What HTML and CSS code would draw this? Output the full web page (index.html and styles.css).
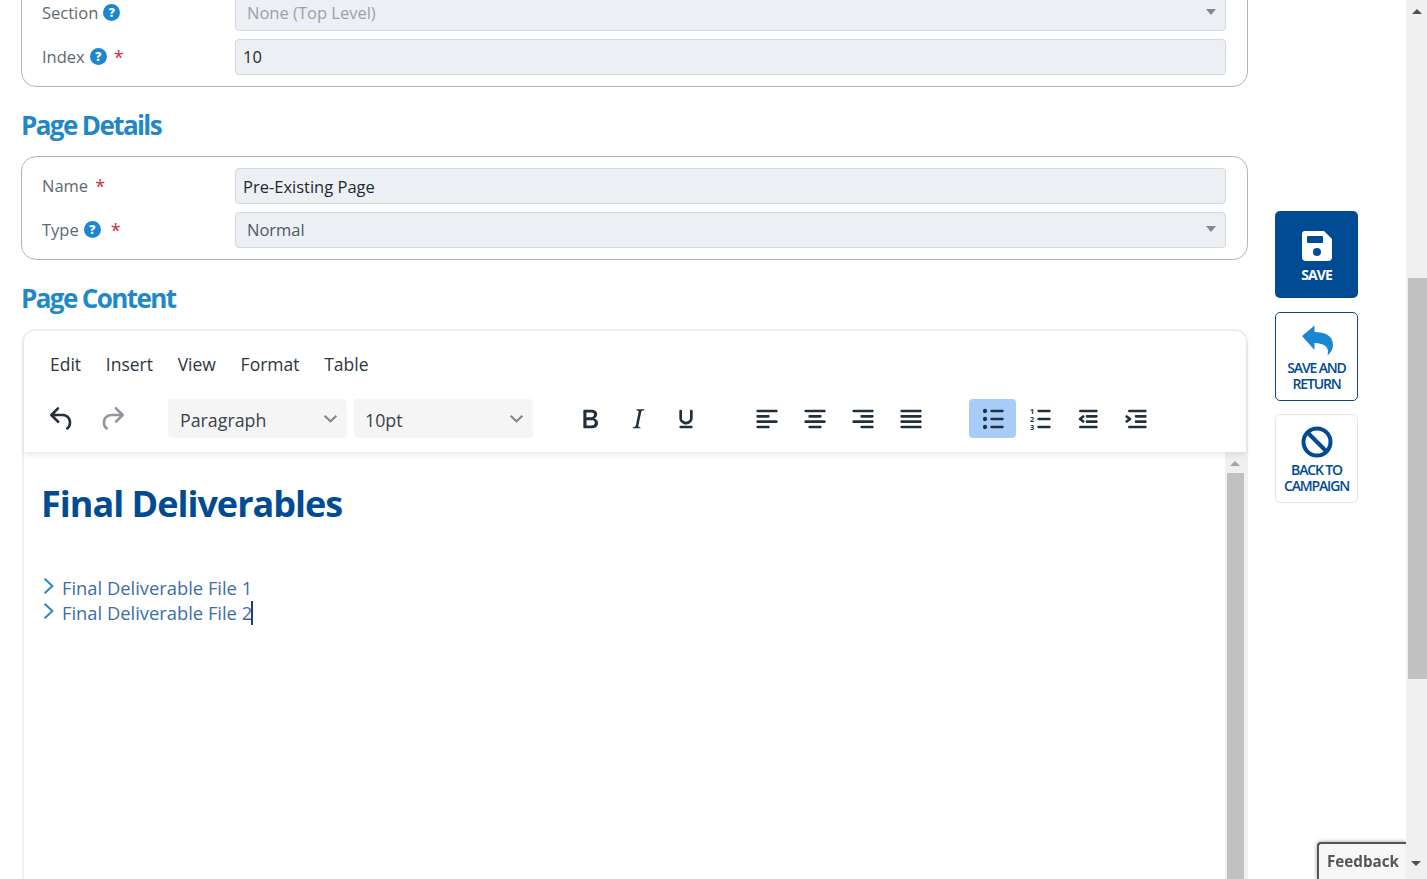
FILE: index.html
```html
<!DOCTYPE html>
<html lang="en">
<head>
<meta charset="utf-8">
<title>Edit Page</title>
<link rel="stylesheet" href="styles.css">
</head>
<body>
<div class="shell">
  <main class="main">
    <section class="card">
      <div class="row">
        <div class="label">Section <span class="help">?</span></div>
        <div class="field select muted">None (Top Level)<span class="tri"></span></div>
      </div>
      <div class="row">
        <div class="label">Index <span class="help">?</span> <span class="req">*</span></div>
        <div class="field text digits">10</div>
      </div>
    </section>

    <h2 class="heading">Page Details</h2>
    <section class="card">
      <div class="row">
        <div class="label">Name <span class="req">*</span></div>
        <div class="field text">Pre-Existing Page</div>
      </div>
      <div class="row">
        <div class="label">Type <span class="help">?</span> <span class="req wide">*</span></div>
        <div class="field select">Normal<span class="tri"></span></div>
      </div>
    </section>

    <h2 class="heading">Page Content</h2>
    <section class="editor">
      <div class="header">
        <nav class="menubar">
          <span>Edit</span><span>Insert</span><span>View</span><span>Format</span><span>Table</span>
        </nav>
        <div class="toolbar">
          <div class="group history">
            <button class="tool tall"><svg class="ico" viewBox="0 0 24 24"><path d="M6.4 8H12c3.7 0 6.2 2 6.8 5.1.6 2.7-.4 5.6-2.3 6.8a1 1 0 0 1-1-1.8c1.1-.6 1.8-2.7 1.4-4.6-.5-2.1-2.1-3.5-4.9-3.5H6.4l3.3 3.3a1 1 0 1 1-1.4 1.4l-5-5a1 1 0 0 1 0-1.4l5-5a1 1 0 0 1 1.4 1.4L6.4 8Z"/></svg></button>
            <button class="tool tall off"><svg class="ico" viewBox="0 0 24 24"><path d="M17.6 10H12c-2.8 0-4.4 1.4-4.9 3.5-.4 2 .3 4 1.4 4.6a1 1 0 1 1-1 1.8c-2-1.2-2.9-4.1-2.3-6.8.6-3 3-5.1 6.8-5.1h5.6l-3.3-3.3a1 1 0 1 1 1.4-1.4l5 5a1 1 0 0 1 0 1.4l-5 5a1 1 0 0 1-1.4-1.4l3.3-3.3Z"/></svg></button>
          </div>
          <div class="group pickers">
            <div class="picker para">Paragraph<svg class="chev" viewBox="0 0 14 8"><path d="M1.5 1.5 7 6.5l5.5-5"/></svg></div>
            <div class="picker size">10pt<svg class="chev" viewBox="0 0 14 8"><path d="M1.5 1.5 7 6.5l5.5-5"/></svg></div>
          </div>
          <div class="group format">
            <button class="tool"><svg class="ico" viewBox="0 0 24 24"><path d="M7.8 19c-.3 0-.5 0-.6-.2l-.2-.5V5.7c0-.2 0-.4.2-.5l.6-.2h5c1.5 0 2.7.3 3.5 1 .7.6 1.1 1.4 1.1 2.5a3 3 0 0 1-.6 1.9c-.4.6-1 1-1.6 1.2.4.1.9.3 1.3.6s.8.7 1 1.2c.4.4.5 1 .5 1.6 0 1.3-.4 2.3-1.3 3-.8.7-2.1 1-3.8 1H7.8Zm5-8.3c.6 0 1.2-.1 1.6-.5.4-.3.6-.7.6-1.3 0-1.1-.8-1.7-2.3-1.7H9.3v3.5h3.4Zm.5 6c.7 0 1.3-.1 1.7-.4.4-.4.6-.9.6-1.5s-.2-1-.7-1.4c-.4-.3-1-.4-2-.4H9.4v3.8h4Z"/></svg></button>
            <button class="tool"><svg class="ico" viewBox="0 0 24 24"><path d="m16.7 4.7-.1.9h-.3c-.6 0-1 0-1.4.3-.3.3-.4.6-.5 1.1l-2.1 9.8v.6c0 .5.4.8 1.4.8h.2l-.2.8H8l.2-.8h.2c1.1 0 1.8-.5 2-1.5l2-9.8.1-.5c0-.6-.4-.8-1.4-.8h-.3l.2-.9h5.8Z"/></svg></button>
            <button class="tool"><svg class="ico" viewBox="0 0 24 24"><path d="M16 5c.6 0 1 .4 1 1v5.5a4 4 0 0 1-.4 1.8l-1 1.4a5.3 5.3 0 0 1-5.5 1 5 5 0 0 1-1.6-1c-.5-.4-.8-.9-1.1-1.4a4 4 0 0 1-.4-1.8V6c0-.6.4-1 1-1s1 .4 1 1v5.5c0 .3 0 .6.2 1l.6.7a3.3 3.3 0 0 0 2.2.8 3.4 3.4 0 0 0 2.2-.8c.3-.2.4-.5.6-.8l.2-.9V6c0-.6.4-1 1-1ZM8 17h8c.6 0 1 .4 1 1s-.4 1-1 1H8a1 1 0 0 1 0-2Z"/></svg></button>
          </div>
          <div class="group align">
            <button class="tool"><svg class="ico" viewBox="0 0 24 24"><path d="M5 5h14c.6 0 1 .4 1 1s-.4 1-1 1H5a1 1 0 1 1 0-2Zm0 4h8c.6 0 1 .4 1 1s-.4 1-1 1H5a1 1 0 1 1 0-2Zm0 8h8c.6 0 1 .4 1 1s-.4 1-1 1H5a1 1 0 0 1 0-2Zm0-4h14c.6 0 1 .4 1 1s-.4 1-1 1H5a1 1 0 0 1 0-2Z"/></svg></button>
            <button class="tool"><svg class="ico" viewBox="0 0 24 24"><path d="M5 5h14c.6 0 1 .4 1 1s-.4 1-1 1H5a1 1 0 1 1 0-2Zm3 4h8c.6 0 1 .4 1 1s-.4 1-1 1H8a1 1 0 1 1 0-2Zm0 8h8c.6 0 1 .4 1 1s-.4 1-1 1H8a1 1 0 0 1 0-2Zm-3-4h14c.6 0 1 .4 1 1s-.4 1-1 1H5a1 1 0 0 1 0-2Z"/></svg></button>
            <button class="tool"><svg class="ico" viewBox="0 0 24 24"><path d="M5 5h14c.6 0 1 .4 1 1s-.4 1-1 1H5a1 1 0 1 1 0-2Zm6 4h8c.6 0 1 .4 1 1s-.4 1-1 1h-8a1 1 0 0 1 0-2Zm0 8h8c.6 0 1 .4 1 1s-.4 1-1 1h-8a1 1 0 0 1 0-2Zm-6-4h14c.6 0 1 .4 1 1s-.4 1-1 1H5a1 1 0 0 1 0-2Z"/></svg></button>
            <button class="tool"><svg class="ico" viewBox="0 0 24 24"><path d="M5 5h14c.6 0 1 .4 1 1s-.4 1-1 1H5a1 1 0 1 1 0-2Zm0 4h14c.6 0 1 .4 1 1s-.4 1-1 1H5a1 1 0 1 1 0-2Zm0 4h14c.6 0 1 .4 1 1s-.4 1-1 1H5a1 1 0 0 1 0-2Zm0 4h14c.6 0 1 .4 1 1s-.4 1-1 1H5a1 1 0 0 1 0-2Z"/></svg></button>
          </div>
          <div class="group lists">
            <button class="tool active"><svg class="ico" viewBox="0 0 24 24"><path d="M11 5h8c.6 0 1 .4 1 1s-.4 1-1 1h-8a1 1 0 0 1 0-2Zm0 6h8c.6 0 1 .4 1 1s-.4 1-1 1h-8a1 1 0 0 1 0-2Zm0 6h8c.6 0 1 .4 1 1s-.4 1-1 1h-8a1 1 0 0 1 0-2Z"/><circle cx="6" cy="6" r="1.6"/><circle cx="6" cy="12" r="1.6"/><circle cx="6" cy="18" r="1.6"/></svg></button>
            <button class="tool narrow"><svg class="ico" viewBox="0 0 24 24"><path d="M11 5h8c.6 0 1 .4 1 1s-.4 1-1 1h-8a1 1 0 0 1 0-2Zm0 6h8c.6 0 1 .4 1 1s-.4 1-1 1h-8a1 1 0 0 1 0-2Zm0 6h8c.6 0 1 .4 1 1s-.4 1-1 1h-8a1 1 0 0 1 0-2Z"/><text class="num" x="6" y="8">1</text><text class="num" x="6" y="14">2</text><text class="num" x="6" y="20">3</text></svg></button>
            <button class="tool"><svg class="ico" viewBox="0 0 24 24"><path d="M7 5h12c.6 0 1 .4 1 1s-.4 1-1 1H7a1 1 0 1 1 0-2Zm5 4h7c.6 0 1 .4 1 1s-.4 1-1 1h-7a1 1 0 0 1 0-2Zm0 4h7c.6 0 1 .4 1 1s-.4 1-1 1h-7a1 1 0 0 1 0-2Zm-5 4h12c.6 0 1 .4 1 1s-.4 1-1 1H7a1 1 0 0 1 0-2ZM8.6 9.3a1 1 0 0 1 1.3 1.5L8.3 12l1.6 1.2a1 1 0 0 1-1.3 1.5l-2.5-2a1 1 0 0 1 0-1.5l2.5-1.9Z"/></svg></button>
            <button class="tool wide"><svg class="ico" viewBox="0 0 24 24"><path d="M7 5h12c.6 0 1 .4 1 1s-.4 1-1 1H7a1 1 0 1 1 0-2Zm5 4h7c.6 0 1 .4 1 1s-.4 1-1 1h-7a1 1 0 0 1 0-2Zm0 4h7c.6 0 1 .4 1 1s-.4 1-1 1h-7a1 1 0 0 1 0-2Zm-5 4h12c.6 0 1 .4 1 1s-.4 1-1 1H7a1 1 0 0 1 0-2ZM5.6 9.3l2.5 1.9a1 1 0 0 1 0 1.5l-2.5 2a1 1 0 0 1-1.3-1.5L6 12l-1.7-1.2a1 1 0 0 1 1.3-1.5Z"/></svg></button>
          </div>
        </div>
      </div>
      <div class="editbody">
        <div class="content">
          <h1 class="doc-title">Final Deliverables</h1>
          <ul class="doc-list">
            <li><svg class="marker" viewBox="0 0 10 16"><path d="M1.5 1.5 8.5 8l-7 6.5"/></svg>Final Deliverable File 1</li>
            <li><svg class="marker" viewBox="0 0 10 16"><path d="M1.5 1.5 8.5 8l-7 6.5"/></svg>Final Deliverable File 2<span class="caret"></span></li>
          </ul>
        </div>
        <div class="inner-scroll"><span class="up-tri"></span><div class="inner-thumb"></div></div>
      </div>
    </section>
  </main>

  <aside class="actions">
    <button class="action primary">
      <svg class="action-ico" viewBox="0 0 32 32"><path class="white" d="M4 1h19l8 8v18a4 4 0 0 1-4 4H5a4 4 0 0 1-4-4V4a3 3 0 0 1 3-3Z"/><rect class="navy" x="6" y="6" width="16" height="7" rx="1"/><circle class="navy" cx="16" cy="22" r="4"/></svg>
      <span>SAVE</span>
    </button>
    <button class="action outline">
      <svg class="action-ico" viewBox="0 0 32 32"><path class="blue" d="M1 12 13.500 1.500V8C23 8 32 11 32 21c0 4-2 8-5.500 10.500 1.500-5 1-12-13-12.500v7Z"/></svg>
      <span>SAVE AND<br>RETURN</span>
    </button>
    <button class="action ghost">
      <svg class="action-ico" viewBox="0 0 32 32"><circle class="ring" cx="16" cy="16" r="13.500"/><path class="ring" d="M6.500 6.500l19 19"/></svg>
      <span>BACK TO<br>CAMPAIGN</span>
    </button>
  </aside>

  <div class="page-scroll"><span class="up-tri dark"></span><div class="page-thumb"></div><span class="down-tri"></span></div>
</div>
<div class="feedback">Feedback</div>
</body>
</html>
```

FILE: styles.css
```css
* { box-sizing: border-box; }
html, body { margin: 0; height: 100%; overflow: hidden; background: #fff; }
body { font-family: "Open Sans", "Noto Sans", sans-serif; color: #24292f; }
button { font: inherit; border: 0; background: none; padding: 0; }

.shell { display: flex; height: 879px; overflow: hidden; }
.main { width: 1227px; margin: -17px 0 0 21px; flex: none; }

.card { border: 1px solid #aeb7bf; border-radius: 15px; padding: 11px 21px 11px 20px; display: flex; flex-direction: column; gap: 8px; }
.row { display: flex; align-items: stretch; }
.label { width: 193px; flex: none; display: flex; align-items: center; gap: 5px; font-size: 16.500px; color: #5d6872; padding-bottom: 1px; white-space: nowrap; }
.help { width: 17px; height: 17px; border-radius: 50%; background: #1b87d3; color: #fff; font-size: 12px; font-weight: 800; line-height: 17px; text-align: center; }
.req { color: #d8283c; font-size: 18px; line-height: 1; margin-left: 2px; }
.req.wide { margin-left: 5px; }
.field { flex: 1; height: 36px; background: #ecf0f5; border: 1px solid #d2d8de; border-radius: 4px; font-size: 16.500px; line-height: 34px; color: #23282d; position: relative; }
.field.text { padding-left: 7px; line-height: 35px; }
.field.digits { line-height: 33px; }
.field.select { padding-left: 11px; color: #4e5963; }
.field.muted { color: #98a1aa; }
.tri { position: absolute; right: 9px; top: 13px; border: 5.500px solid transparent; border-top: 6px solid #808890; border-bottom: 0; }

.heading { height: 69px; margin: 0; padding-top: 20px; font-size: 26px; line-height: 36px; font-weight: 700; letter-spacing: -1.600px; color: #1e88c9; }

.editor { border: 2px solid #f0f0f0; border-bottom: 0; border-radius: 13px 13px 0 0; margin-left: 1px; width: 1226px; height: 620px; background: #fff; }
.header { height: 121px; box-shadow: 0 3px 6px rgba(0,0,0,.09); position: relative; border-radius: 11px 11px 0 0; }
.menubar { display: flex; gap: 24.700px; padding: 19px 0 0 26px; height: 68px; font-size: 17.500px; line-height: 28px; color: #2d3640; }

.toolbar { display: flex; align-items: center; height: 39px; padding-left: 12.500px; }
.group { display: flex; align-items: center; }
.tool { width: 48px; height: 39px; display: flex; align-items: center; justify-content: center; border-radius: 4px; }
.tool.tall { width: 50.500px; }
.tool.narrow { width: 47px; }
.tool.wide { width: 49px; }
.ico { width: 32px; height: 32px; fill: #222f3e; }
.tool.off .ico { fill: #8f969d; }
.tool.active { background: #a6ccf7; width: 47px; }
.num { font-family: "Open Sans", sans-serif; font-size: 5.500px; font-weight: 700; text-anchor: middle; fill: #222f3e; }
.pickers { margin-left: 30.500px; gap: 7px; }
.picker { width: 179px; height: 39px; background: #f5f5f5; border-radius: 4px; display: flex; align-items: center; justify-content: space-between; padding: 3px 9px 0 12px; font-size: 17.800px; color: #39424c; }
.picker.size { padding-left: 11px; }
.chev { width: 15px; height: 9px; fill: none; stroke: #7f868d; stroke-width: 2; margin-top: -3px; }
.format { margin-left: 33px; }
.align { margin-left: 33px; }
.lists { margin-left: 34px; }

.editbody { display: flex; height: 498px; }
.content { flex: 1; padding: 28px 0 0 17px; }
.doc-title { margin: 0; font-size: 36px; line-height: 48px; font-weight: 700; letter-spacing: -1px; color: #004b93; }
.doc-list { list-style: none; margin: 47px 0 0; padding: 0; font-size: 18.350px; line-height: 25px; color: #3c6ea8; }
.doc-list li { display: flex; align-items: center; }
.marker { width: 11px; height: 18px; margin: -4px 8px 0 2px; fill: none; stroke: #2a85c5; stroke-width: 1.800; }
.caret { width: 2px; height: 24px; background: #1c3f6e; margin-left: -1px; }

.inner-scroll { width: 21px; background: #f0f0f0; display: flex; flex-direction: column; align-items: flex-start; padding-top: 9px; }
.inner-scroll .up-tri { margin-left: 5px; }
.inner-thumb { width: 17px; flex: 1; margin: 7px 0 0 2px; background: #c1c1c1; }
.up-tri { border: 5px solid transparent; border-bottom: 5.500px solid #a3a3a3; border-top: 0; flex: none; }
.up-tri.dark { border-bottom-color: #505050; }

.actions { width: 83px; margin: 211px 0 0 27px; flex: none; display: flex; flex-direction: column; }
.action { height: 89px; width: 83px; border-radius: 5px; display: flex; flex-direction: column; align-items: center; font-size: 14px; line-height: 16px; font-weight: 600; letter-spacing: -1.150px; text-align: center; }
.action-ico { width: 32px; height: 32px; margin-bottom: 4px; flex: none; }
.primary { height: 87px; background: #004b93; color: #fff; padding-top: 19px; margin-bottom: 14px; font-weight: 700; letter-spacing: -.900px; }
.primary .action-ico { margin-bottom: 5px; }
.outline { border: 1px solid #0b4a86; color: #004b93; padding-top: 11px; margin-bottom: 13px; }
.ghost { border: 1px solid #e1e4e8; color: #004b93; padding-top: 11px; }
.white { fill: #fff; }
.navy { fill: #004b93; }
.blue { fill: #1b87d3; }
.ring { fill: none; stroke: #004b93; stroke-width: 4; }

.page-scroll { width: 21px; margin-left: auto; background: #f0f0f0; display: flex; flex-direction: column; align-items: flex-end; position: relative; padding-top: 9px; }
.page-scroll .up-tri { margin-right: 5px; }
.page-thumb { width: 19px; height: 401px; margin-top: 264px; background: #c1c1c1; }
.down-tri { border: 5px solid transparent; border-top: 5.500px solid #505050; border-bottom: 0; margin: 182px 6px 0 0; }

.feedback { position: fixed; right: 21px; bottom: 0; width: 89px; height: 37px; background: #f7f7f7; border: 2px solid #555; border-width: 2px 0 0 2px; border-radius: 4px 0 0 0; box-shadow: 0 0 4px rgba(0,0,0,.4); font-size: 15.200px; font-weight: 700; line-height: 35px; padding-left: 8px; color: #555; white-space: nowrap; clip-path: inset(-6px 0 0 -6px); }
```
